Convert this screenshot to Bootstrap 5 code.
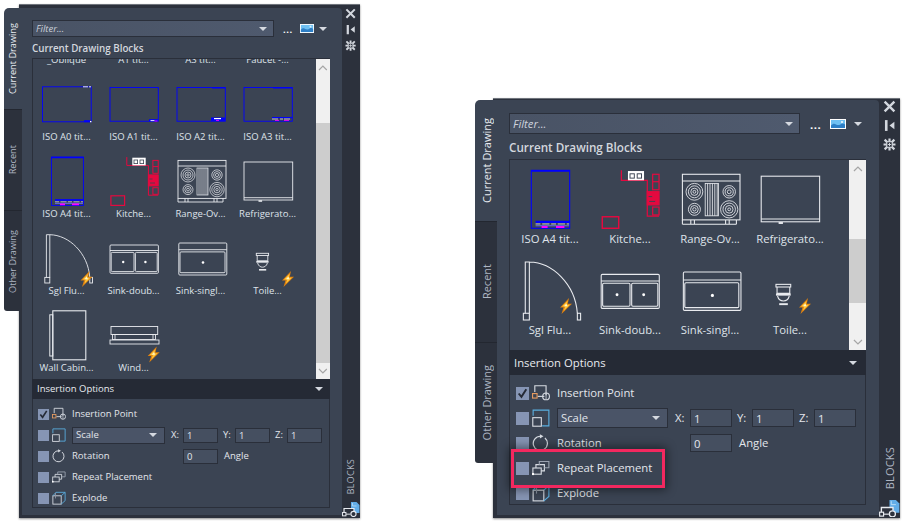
<!DOCTYPE html>
<html lang="en">
<head>
<meta charset="utf-8">
<title>Blocks palette</title>
<link rel="stylesheet" href="https://cdn.jsdelivr.net/npm/bootstrap@5.3.0/dist/css/bootstrap.min.css">
<style>
  html, body { height: 100%; background: #fff; overflow: hidden; }
  body { position: relative; font-family: "Open Sans", "Liberation Sans", sans-serif; color: #e3e6ec; }

  /* sizes differ between the two palettes, the structure does not */
  .pal-sm {
    left: 4px; top: 4px; width: 356px; height: 514px;
    --tab: 18px; --tab-pt: 4px; --win-pt: 3px; --frame: 3px; --strip: 18px; --fs: 9.5px; --head: 9.8px;
    --pad-t: 12px; --pad-l: 10px; --pad-r: 12px; --filter-h: 17px; --title-h: 21px; --row-gap: 11px;
    --thumb: 50px; --lab: 16px; --cell: 67px; --grid-h: 321px; --grid-top: -57.5px;
    --bar: 14px; --sb-a: 64px; --sb-b: 240px; --sb-c: 16px;
    --opt-h: 20px; --opt-pt: 4.5px; --row: 21px; --opt-pl: 5px;
    --cb: 11px; --ico: 14px; --g1: 3px; --g2: 6px; --sel: 93px; --ctl-h: 15px; --inp: 35px;
    --ax-x: 18px; --ax-p: 6px; --ax: 17px; --ax-p2: 5px; --rot: 111px; --ang: 6px;
    --filter-w: 242px; --dots-g: 9px; --dots: 14px; --imgw: 14px; --imgh: 9px; --tool-g: 3px; --car-g: 5px;
    --vtxt: 9.2px; --strip-gap: 5px; --blocks-mb: 8px;
  }
  .pal-lg {
    left: 475px; top: 98px; width: 425px; height: 420px;
    --tab: 22px; --tab-pt: 2px; --win-pt: 1px; --frame: 4px; --strip: 21px; --fs: 11.3px; --head: 11.7px;
    --pad-t: 13px; --pad-l: 12px; --pad-r: 13px; --filter-h: 21px; --title-h: 25px; --row-gap: 11px;
    --thumb: 60px; --lab: 20px; --cell: 80px; --grid-h: 191px; --grid-top: 8.5px;
    --bar: 17px; --sb-a: 79px; --sb-b: 64px; --sb-c: 47px;
    --opt-h: 25px; --opt-pt: 5.5px; --row: 25px; --opt-pl: 6px;
    --cb: 13px; --ico: 18px; --g1: 3px; --g2: 7px; --sel: 111px; --ctl-h: 18px; --inp: 42px;
    --ax-x: 22px; --ax-p: 7px; --ax: 20px; --ax-p2: 5px; --rot: 133px; --ang: 7px;
    --filter-w: 291px; --dots-g: 10px; --dots: 16px; --imgw: 16px; --imgh: 10px; --tool-g: 4px; --car-g: 8px;
    --vtxt: 11px; --strip-gap: 6px; --blocks-mb: 10px;
  }

  .palette { position: absolute; display: flex; font-size: var(--fs); line-height: 1; }
  .tabs { width: var(--tab); padding-top: var(--tab-pt); margin-bottom: auto; position: relative; z-index: 2; flex: none; }
  .tab {
    height: calc(100% / 3); display: flex; align-items: center; justify-content: center;
    background: #2c313c; border-top: 1px solid #232730; color: #aeb5c2;
  }
  .tabs.t-sm { height: 307px; }
  .tabs.t-lg { height: 365px; }
  .tab span { writing-mode: vertical-rl; transform: rotate(180deg); white-space: nowrap; font-size: var(--vtxt); }
  .tab:first-child { background: #3b4453; border-top: 0; border-radius: 5px 0 0 0; color: #e8ebf0; }
  .tab:last-child { border-radius: 0 0 0 3px; }

  .window {
    flex: 1; min-width: 0; display: flex; margin-left: calc(var(--frame) * -1);
    padding: var(--win-pt) 0 3px var(--frame); background: #2c313c;
    border-top: 1px solid #6f747c; box-shadow: 0 1px 2px rgba(0,0,0,.45);
  }
  .body { flex: 1; min-width: 0; display: flex; flex-direction: column; background: #3b4453;
    padding: var(--pad-t) var(--pad-r) 0 var(--pad-l); border-radius: 0 4px 0 0; }
  .strip { width: var(--strip); flex: none; display: flex; flex-direction: column; align-items: center; margin-bottom: -2px; color: #c6cbd4; }
  .strip svg.s { width: calc(var(--strip) * .62); height: calc(var(--strip) * .62); margin-bottom: var(--strip-gap); flex: none; }
  .blocks { writing-mode: vertical-rl; transform: rotate(180deg); font-size: var(--vtxt); letter-spacing: .2px; color: #aeb5c2; margin-top: auto; margin-bottom: var(--blocks-mb); }
  .strip svg.b { width: var(--strip); height: calc(var(--strip) * .83); margin-bottom: 0; }

  .filter.form-control {
    width: var(--filter-w); height: var(--filter-h); min-height: 0; padding: 0 0 0 3px; font-size: var(--fs); font-style: italic; line-height: 1;
    color: #d8dce4; border: 1px solid #2a2f3a; border-radius: 0;
    background: linear-gradient(90deg, #495365, #4f5a6e);
  }
  .filter::placeholder { color: #ccd1da; opacity: 1; }
  .caret { display: inline-block; width: 0; height: 0; border-style: solid; border-width: 4px 4px 0; border-color: #d5d9e0 transparent transparent; flex: none; }
  .filter-wrap { position: relative; flex: none; }
  .filter-wrap .caret { position: absolute; right: 7px; top: calc(50% - 2px); }
  .dots { letter-spacing: .5px; font-weight: 700; color: #fff; width: var(--dots); margin-left: var(--dots-g); line-height: 1; padding-top: 3px; }
  .pic { width: var(--imgw); height: var(--imgh); margin-left: var(--tool-g); flex: none; display: block; }
  .pic + .caret { margin-left: var(--car-g); }
  .title { height: var(--title-h); display: flex; align-items: center; font-weight: 600; font-size: var(--head); color: #d3d7de; flex: none; padding-top: 3px; }

  .blocks-box { height: var(--grid-h); display: flex; flex: none; border-top: 1px solid #2a2f3a; border-left: 1px solid #2a2f3a; overflow: hidden; }
  .grid-area { flex: 1; min-width: 0; overflow: hidden; }
  .thumbs { display: grid; grid-template-columns: repeat(4, var(--cell)); row-gap: var(--row-gap); margin-top: var(--grid-top); }
  .cell { display: flex; flex-direction: column; align-items: center; }
  .cell svg { width: var(--thumb); height: var(--thumb); display: block; overflow: visible; flex: none; fill: none; stroke: #e9ebef; stroke-width: .9; }
  .cell div { height: var(--lab); line-height: var(--lab); white-space: nowrap; color: #dfe3ea; }

  .bar { width: var(--bar); flex: none; background: #f0f0f0; display: flex; flex-direction: column; position: relative; }
  .bar .a { height: var(--sb-a); }
  .bar .b { height: var(--sb-b); background: #cdcdcd; }
  .bar .c { height: var(--sb-c); }
  .bar svg { position: absolute; left: 15%; width: 70%; height: 8px; fill: none; stroke: #a5a5a5; stroke-width: 1.2; }
  .bar svg.up { top: 5px; }
  .bar svg.down { bottom: 4px; }

  .opt-head { height: var(--opt-h); background: #252a35; display: flex; align-items: center; justify-content: space-between; padding: 0 calc(var(--pad-l) - 3px) 0 5px; flex: none; font-size: var(--fs); color: #e8ebf0; }
  .opt-box { flex: none; padding: var(--opt-pt) 0 0 var(--opt-pl); border: 1px solid #2a2f3a; border-top: 0; }
  .pal-sm .opt-box { height: 109px; }
  .pal-lg .opt-box { height: 130px; }
  .opt { height: var(--row); display: flex; align-items: center; position: relative; }
  .opt .form-check-input { width: var(--cb); height: var(--cb); margin: 0 var(--g1) 0 0; flex: none; border: 0; border-radius: 0; background-color: #8695b4; opacity: 1; }
  .opt .form-check-input:checked { background-color: #8695b4; background-image: url("data:image/svg+xml,%3csvg xmlns='http://www.w3.org/2000/svg' viewBox='0 0 12 12'%3e%3cpath fill='none' stroke='%23262b36' stroke-width='1.8' d='M2.5 6l2.5 3 4.5-7'/%3e%3c/svg%3e"); }
  .opt > svg { width: var(--ico); height: var(--ico); margin-right: var(--g2); flex: none; fill: none; }
  .rot { width: var(--rot); flex: none; }
  .sel.form-select {
    width: var(--sel); height: calc(var(--ctl-h) + 2px); min-height: 0; padding: 0 0 0 3px; font-size: var(--fs); line-height: 1; color: #e3e6ec; flex: none;
    border: 1px solid #2a2f3a; border-radius: 0; background-color: #4a5467;
    background-image: url("data:image/svg+xml,%3csvg xmlns='http://www.w3.org/2000/svg' viewBox='0 0 8 4'%3e%3cpath fill='%23d5d9e0' d='M0 0h8L4 4z'/%3e%3c/svg%3e");
    background-size: 8px 4px; background-position: right 7px center;
  }
  .axis { padding-left: var(--ax-p2); width: var(--ax); flex: none; }
  .axis.x { padding-left: var(--ax-p); width: var(--ax-x); }
  .num.form-control { width: var(--inp); height: var(--ctl-h); min-height: 0; padding: 0 0 0 3px; font-size: var(--fs); line-height: 1; flex: none; color: #e3e6ec; border: 1px solid #2a2f3a; border-radius: 0; background: #454f60; }
  .angle { margin-left: var(--ang); }

  /* the red callout sits over the rows above and below Repeat Placement */
  .callout > * { position: relative; z-index: 2; }
  .callout::before {
    content: ""; position: absolute; z-index: 1; left: -5px; top: -7px; width: 154px; height: 39px;
    border: 3px solid #f3285f; background: #3b4453; box-shadow: 0 0 9px 2px rgba(0,0,0,.45);
  }
</style>
</head>
<body>

<svg width="0" height="0" class="position-absolute">
  <defs>
    <symbol id="bolt" viewBox="0 0 12 16" overflow="visible">
      <path d="M9 0L0 9.500h3.500L1.500 16 12 5.800H7.800z" fill="#e0820f" stroke="none"/>
      <path d="M7.800 2.800L2 8.500h3.200L3.800 12.800 9.800 6.800H6.400z" fill="#ffc93c" stroke="none"/>
      <path d="M6.400 5.500L4 8.300h3.400z" fill="#fff6c8" stroke="none"/>
    </symbol>
    <symbol id="iso-a0" viewBox="0 0 50 50" overflow="visible">
      <rect x=".5" y="7.800" width="48.700" height="35" stroke="#0000ff" fill="none"/>
      <path d="M41 7.800h5M47 7.800h2" stroke="#fff"/>
      <path d="M42 42.200h6" stroke="#0000ff" stroke-width="2"/><path d="M48 42.600h1.400" stroke="#fff" stroke-width="1.200"/>
    </symbol>
    <symbol id="iso-a1" viewBox="0 0 50 50" overflow="visible">
      <rect x="1" y="8.500" width="48.300" height="33.700" stroke="#0000ff" fill="none"/>
      <path d="M40 41.200h9" stroke="#0000ff" stroke-width="2"/><path d="M41.500 41.600h4" stroke="#fff"/><path d="M45.500 42h3" stroke="#ff00ff"/>
    </symbol>
    <symbol id="iso-a2" viewBox="0 0 50 50" overflow="visible">
      <rect x="1" y="8.500" width="48.300" height="33.700" stroke="#0000ff" fill="none"/>
      <path d="M36 8.900h13" stroke="#0000ff" stroke-width="1.200"/>
      <path d="M35 40.200h14" stroke="#0000ff" stroke-width="3.400"/><path d="M38 39.600h7" stroke="#fff" stroke-width="1.200"/><path d="M40 41.400h3" stroke="#ff00ff"/>
    </symbol>
    <symbol id="iso-a3" viewBox="0 0 50 50" overflow="visible">
      <rect x="1" y="8.500" width="48.300" height="33.700" stroke="#0000ff" fill="none"/>
      <path d="M30 8.900h19" stroke="#0000ff" stroke-width="1.200"/>
      <path d="M29 38.600h20" stroke="#0000ff" stroke-width="1.200"/>
      <path d="M29 40h20" stroke="#fff" stroke-width=".7" stroke-dasharray="6 2 3 1"/>
      <path d="M32 41.400h4M41 41.400h5" stroke="#ff00ff"/>
    </symbol>
    <symbol id="iso-a4" viewBox="0 0 50 50" overflow="visible">
      <rect x="9.400" y="1.100" width="32" height="48.300" stroke="#0000ff" fill="none"/>
      <path d="M9.400 1.500h32" stroke="#0000ff" stroke-width="1.400"/>
      <path d="M13 44h28" stroke="#0000ff" stroke-width="1.800"/>
      <path d="M13 45.800h28" stroke="#fff" stroke-width=".6" stroke-dasharray="4 1.500 6 1.500"/>
      <path d="M13 47.300h28" stroke="#6a6af5" stroke-width="1"/>
      <path d="M18 48.400h5M30 48.400h7" stroke="#ff00ff" stroke-width="1.600"/>
    </symbol>
    <symbol id="kitchen" viewBox="0 0 50 50" overflow="visible">
      <g stroke="#e4093f" stroke-width="1" fill="none">
        <path d="M17.800 1.100v8.300h21.600v29.800h9.800"/>
        <rect x="43.900" y="4.400" width="5.300" height="12.900"/><path d="M43.900 10.600h5.300"/>
        <rect x="39.400" y="18.900" width="9.800" height="11" fill="#e4093f"/>
        <rect x="43.900" y="31.700" width="5.300" height="6.600"/>
        <rect x="1.900" y="39.800" width="13.700" height="9.600" stroke-width="1.200"/>
      </g>
      <rect x="23.300" y="1.700" width="13.400" height="7.700" fill="#fff" stroke="none"/>
      <rect x="25" y="4" width="3.600" height="3.600" fill="none" stroke="#3b4453" stroke-width=".8"/>
      <rect x="31" y="4" width="3.600" height="3.600" fill="none" stroke="#3b4453" stroke-width=".8"/>
      <path d="M40.500 23h3M41 27h5" stroke="#3b4453" stroke-width=".8"/>
    </symbol>
    <symbol id="range" viewBox="0 0 50 50" overflow="visible">
      <rect x="2" y="4.400" width="48" height="38"/><path d="M2 10h48M2 46h45M2 42.400v3.600M47 42.400v3.600M9 42.400v3.600M12 42.400v3.600M38 42.400v3.600M41 42.400v3.600"/>
      <g stroke-width=".7">
        <circle cx="12" cy="19" r="7"/><circle cx="12" cy="19" r="5"/><circle cx="12" cy="19" r="3"/><circle cx="12" cy="19" r="1.200"/>
        <circle cx="12" cy="33.600" r="5"/><circle cx="12" cy="33.600" r="3.200"/><circle cx="12" cy="33.600" r="1.400"/>
        <circle cx="41" cy="19" r="5.200"/><circle cx="41" cy="19" r="3.400"/><circle cx="41" cy="19" r="1.600"/>
        <circle cx="41" cy="33.600" r="7.200"/><circle cx="41" cy="33.600" r="5.200"/><circle cx="41" cy="33.600" r="3.200"/><circle cx="41" cy="33.600" r="1.200"/>
        <rect x="21" y="12" width="11" height="27"/><path d="M23 12v27M25 12v27M27 12v27M29 12v27M31 12v27"/>
      </g>
    </symbol>
    <symbol id="fridge" viewBox="0 0 50 50" overflow="visible">
      <rect x="1" y="6" width="48.700" height="38"/><path d="M1 41.700h48.700"/><path d="M15.500 45h3.600" stroke-width="1.600"/>
    </symbol>
    <symbol id="door" viewBox="0 0 50 50" overflow="visible">
      <path d="M4.400 44.400V1.700h3.400v42.700M7.800 1.700C27 2 46 20 47.800 44.400"/>
      <rect x="2.800" y="44.400" width="5" height="5.600"/><rect x="47.800" y="44.400" width="2.700" height="5.600"/>
    </symbol>
    <symbol id="sink2" viewBox="0 0 50 50" overflow="visible">
      <rect x="1" y="12" width="48.400" height="28.300" rx="1"/><path d="M1 17.500h48.400"/>
      <rect x="2.200" y="19.400" width="22.800" height="19.200" rx="1"/><rect x="26.400" y="19.400" width="21.800" height="19.200" rx="1"/>
      <circle cx="14.200" cy="29" r="1.200" fill="#fff" stroke="none"/><circle cx="36.400" cy="29" r="1.200" fill="#fff" stroke="none"/>
    </symbol>
    <symbol id="sink1" viewBox="0 0 50 50" overflow="visible">
      <rect x="2.800" y="10" width="48" height="32" rx="1"/><path d="M2.800 16.700h48"/>
      <rect x="4" y="18.900" width="45" height="20.800" rx="1"/>
      <circle cx="27" cy="29.500" r="1.300" fill="#fff" stroke="none"/>
    </symbol>
    <symbol id="toilet" viewBox="0 0 50 50" overflow="visible">
      <rect x="13.300" y="20.300" width="12.300" height="2.200"/>
      <path d="M14.200 22.500v5.300h10.600v-5.300"/><path d="M13.300 28.800h12.300" stroke-width="1.800"/>
      <path d="M14.600 30c.8 3 3 4.200 4.900 4.200s4.100-1.200 4.900-4.200"/><path d="M16 36.800h7.200" stroke-width="1.600"/>
    </symbol>
    <symbol id="cabinet" viewBox="0 0 50 50" overflow="visible">
      <rect x="10.800" y=".8" width="33" height="49" stroke-width="1.100"/><rect x="7.800" y="4.800" width="3" height="41.200" stroke-width="1"/>
    </symbol>
    <symbol id="wind" viewBox="0 0 50 50" overflow="visible">
      <rect x="2" y="16.500" width="46.700" height="8"/>
      <rect x="3.500" y="24.500" width="43" height="5"/><path d="M6 24.500v5M44 24.500v5"/>
      <rect x="1" y="30" width="49" height="4"/>
    </symbol>

    <symbol id="i-point" viewBox="0 0 16 16"><path d="M2.500 7V1.500h10V10" stroke="#d7dbe2"/><path d="M5 11h6" stroke="#d7dbe2"/><rect x=".5" y="8.500" width="4" height="4" stroke="#e59a5f"/><circle cx="12.500" cy="11" r="3" stroke="#d7dbe2"/><path d="M12.500 8v6" stroke="#d7dbe2" stroke-width=".7"/></symbol>
    <symbol id="i-scale" viewBox="0 0 16 16"><path d="M1 6V1h14v14h-6" stroke="#5aaee0"/><rect x=".7" y="7.700" width="7.600" height="7.600" stroke="#d7dbe2"/></symbol>
    <symbol id="i-rot" viewBox="0 0 16 16"><path d="M11.500 3.500A6.300 6.300 0 1 1 7.500 2" stroke="#d7dbe2" stroke-width="1.100"/><path d="M7 .2l3.200 1.800L7 4z" fill="#d7dbe2"/></symbol>
    <symbol id="i-rep" viewBox="0 0 16 16"><rect x=".8" y="8" width="7.400" height="5.500" stroke="#d7dbe2"/><path d="M3.500 8V5h7.500v5.500H8.200" stroke="#d7dbe2"/><path d="M6.500 5V2.200H15v5.600h-4" stroke="#9aa2b0"/><rect x="0" y="12.500" width="1.800" height="1.800" fill="#fff"/></symbol>
    <symbol id="i-exp" viewBox="0 0 16 16"><rect x="1" y="5.500" width="9.500" height="9.500" stroke="#d7dbe2"/><path d="M1 5.500l3.500-4H15v9.500l-4.500 4M10.500 5.500L15 1.500" stroke="#5aaee0"/><path d="M4 2v6.500" stroke="#8d96a5"/></symbol>
    <symbol id="i-x" viewBox="0 0 12 12"><path d="M1.500 1.500l9 9M10.500 1.500l-9 9" stroke="#d3d7de" stroke-width="2.200" fill="none"/></symbol>
    <symbol id="i-pin" viewBox="0 0 12 12"><path d="M3 1v10" stroke="#d3d7de" stroke-width="2.400"/><path d="M10.500 2.500v7L6 6z" fill="#d3d7de"/></symbol>
    <symbol id="i-gear" viewBox="0 0 12 12"><path d="M1.500 1.500l9 9M10.500 1.500l-9 9M6 .5v11M.5 6h11" stroke="#d3d7de" stroke-width="2"/><path d="M3.500 3.500h5v5h-5z" fill="#2c313c" stroke="#d3d7de"/><path d="M4.500 6h3M6 4.500v3" stroke="#d3d7de" stroke-width=".9"/></symbol>
    <symbol id="i-pal" viewBox="0 0 18 15"><path d="M9 0h5.500L17.500 3v8H9z" fill="#62ade8"/><path d="M10.500 1v3h4" fill="none" stroke="#bfe0f7" stroke-width=".8"/><path d="M2 13V6.500h10V9" stroke="#e8ebf0" stroke-width="1.200" fill="#2c313c"/><rect x=".5" y="10.500" width="3.400" height="3.400" fill="#2c313c" stroke="#e8ebf0"/><path d="M4 12.200h4.500" stroke="#e8ebf0"/><circle cx="11.500" cy="12" r="2.600" stroke="#e8ebf0" stroke-width="1.100" fill="#2c313c"/></symbol>
    <symbol id="pic" viewBox="0 0 16 10" preserveAspectRatio="none"><rect width="16" height="10" fill="#fff"/><rect x="1" y="1" width="14" height="8" fill="#6fc0f2"/><path d="M1 9V6.500c2-2 3.500-2 5-1 2 1 4 .5 5-.5 1.500-1 3-.5 4 .5V9z" fill="#2e7fc6"/><rect x="11" y="2" width="2" height="2" fill="#d7eefc"/></symbol>
    <symbol id="up" viewBox="0 0 10 8"><path d="M1 6l4-4 4 4"/></symbol>
    <symbol id="down" viewBox="0 0 10 8"><path d="M1 2l4 4 4-4"/></symbol>
  </defs>
</svg>

<!-- left palette -->
<div class="palette pal-sm">
  <div class="tabs t-sm d-flex flex-column">
    <div class="tab flex-fill"><span>Current Drawing</span></div>
    <div class="tab flex-fill"><span>Recent</span></div>
    <div class="tab flex-fill"><span>Other Drawing</span></div>
  </div>
  <div class="window">
    <div class="body">
      <div class="d-flex align-items-center">
        <div class="filter-wrap"><input class="form-control filter" placeholder="Filter..."><span class="caret"></span></div>
        <span class="dots">...</span>
        <svg class="pic"><use href="#pic"/></svg>
        <span class="caret"></span>
      </div>
      <div class="title">Current Drawing Blocks</div>
      <div class="blocks-box">
        <div class="grid-area">
          <div class="thumbs">
            <div class="cell"><svg></svg><div>_Oblique</div></div>
            <div class="cell"><svg></svg><div>A1 tit...</div></div>
            <div class="cell"><svg></svg><div>A3 tit...</div></div>
            <div class="cell"><svg></svg><div>Faucet -...</div></div>
            <div class="cell"><svg><use href="#iso-a0"/></svg><div>ISO A0 tit...</div></div>
            <div class="cell"><svg><use href="#iso-a1"/></svg><div>ISO A1 tit...</div></div>
            <div class="cell"><svg><use href="#iso-a2"/></svg><div>ISO A2 tit...</div></div>
            <div class="cell"><svg><use href="#iso-a3"/></svg><div>ISO A3 tit...</div></div>
            <div class="cell"><svg><use href="#iso-a4"/></svg><div>ISO A4 tit...</div></div>
            <div class="cell"><svg><use href="#kitchen"/></svg><div>Kitche...</div></div>
            <div class="cell"><svg><use href="#range"/></svg><div>Range-Ov...</div></div>
            <div class="cell"><svg><use href="#fridge"/></svg><div>Refrigerato...</div></div>
            <div class="cell"><svg><use href="#door"/><use href="#bolt" x="38.500" y="38" width="12" height="16"/></svg><div>Sgl Flu...</div></div>
            <div class="cell"><svg><use href="#sink2"/></svg><div>Sink-doub...</div></div>
            <div class="cell"><svg><use href="#sink1"/></svg><div>Sink-singl...</div></div>
            <div class="cell"><svg><use href="#toilet"/><use href="#bolt" x="39" y="38" width="12" height="16"/></svg><div>Toile...</div></div>
            <div class="cell"><svg><use href="#cabinet"/></svg><div>Wall Cabin...</div></div>
            <div class="cell"><svg><use href="#wind"/><use href="#bolt" x="38.700" y="36.500" width="12" height="16"/></svg><div>Wind...</div></div>
          </div>
        </div>
        <div class="bar"><div class="a"></div><div class="b"></div><div class="c"></div>
          <svg class="up"><use href="#up"/></svg><svg class="down"><use href="#down"/></svg></div>
      </div>
      <div class="opt-head"><span>Insertion Options</span><span class="caret"></span></div>
      <div class="opt-box">
        <div class="opt"><input class="form-check-input" type="checkbox" checked><svg><use href="#i-point"/></svg><span>Insertion Point</span></div>
        <div class="opt"><input class="form-check-input" type="checkbox"><svg><use href="#i-scale"/></svg>
          <select class="form-select sel"><option>Scale</option></select>
          <span class="axis x">X:</span><input class="form-control num" value="1">
          <span class="axis">Y:</span><input class="form-control num" value="1">
          <span class="axis">Z:</span><input class="form-control num" value="1"></div>
        <div class="opt"><input class="form-check-input" type="checkbox"><svg><use href="#i-rot"/></svg><span class="rot">Rotation</span><input class="form-control num" value="0"><span class="angle">Angle</span></div>
        <div class="opt"><input class="form-check-input" type="checkbox"><svg><use href="#i-rep"/></svg><span>Repeat Placement</span></div>
        <div class="opt"><input class="form-check-input" type="checkbox"><svg><use href="#i-exp"/></svg><span>Explode</span></div>
      </div>
    </div>
    <div class="strip">
      <svg class="s"><use href="#i-x"/></svg><svg class="s"><use href="#i-pin"/></svg><svg class="s"><use href="#i-gear"/></svg>
      <span class="blocks">BLOCKS</span>
      <svg class="s b"><use href="#i-pal"/></svg>
    </div>
  </div>
</div>

<!-- right palette -->
<div class="palette pal-lg">
  <div class="tabs t-lg d-flex flex-column">
    <div class="tab flex-fill"><span>Current Drawing</span></div>
    <div class="tab flex-fill"><span>Recent</span></div>
    <div class="tab flex-fill"><span>Other Drawing</span></div>
  </div>
  <div class="window">
    <div class="body">
      <div class="d-flex align-items-center">
        <div class="filter-wrap"><input class="form-control filter" placeholder="Filter..."><span class="caret"></span></div>
        <span class="dots">...</span>
        <svg class="pic"><use href="#pic"/></svg>
        <span class="caret"></span>
      </div>
      <div class="title">Current Drawing Blocks</div>
      <div class="blocks-box">
        <div class="grid-area">
          <div class="thumbs">
            <div class="cell"><svg><use href="#iso-a4"/></svg><div>ISO A4 tit...</div></div>
            <div class="cell"><svg><use href="#kitchen"/></svg><div>Kitche...</div></div>
            <div class="cell"><svg><use href="#range"/></svg><div>Range-Ov...</div></div>
            <div class="cell"><svg><use href="#fridge"/></svg><div>Refrigerato...</div></div>
            <div class="cell"><svg><use href="#door"/><use href="#bolt" x="40" y="38" width="12" height="16"/></svg><div>Sgl Flu...</div></div>
            <div class="cell"><svg><use href="#sink2"/></svg><div>Sink-doub...</div></div>
            <div class="cell"><svg><use href="#sink1"/></svg><div>Sink-singl...</div></div>
            <div class="cell"><svg><use href="#toilet"/><use href="#bolt" x="39" y="38" width="12" height="16"/></svg><div>Toile...</div></div>
          </div>
        </div>
        <div class="bar"><div class="a"></div><div class="b"></div><div class="c"></div>
          <svg class="up"><use href="#up"/></svg><svg class="down"><use href="#down"/></svg></div>
      </div>
      <div class="opt-head"><span>Insertion Options</span><span class="caret"></span></div>
      <div class="opt-box">
        <div class="opt"><input class="form-check-input" type="checkbox" checked><svg><use href="#i-point"/></svg><span>Insertion Point</span></div>
        <div class="opt"><input class="form-check-input" type="checkbox"><svg><use href="#i-scale"/></svg>
          <select class="form-select sel"><option>Scale</option></select>
          <span class="axis x">X:</span><input class="form-control num" value="1">
          <span class="axis">Y:</span><input class="form-control num" value="1">
          <span class="axis">Z:</span><input class="form-control num" value="1"></div>
        <div class="opt"><input class="form-check-input" type="checkbox"><svg><use href="#i-rot"/></svg><span class="rot">Rotation</span><input class="form-control num" value="0"><span class="angle">Angle</span></div>
        <div class="opt callout"><input class="form-check-input" type="checkbox"><svg><use href="#i-rep"/></svg><span>Repeat Placement</span></div>
        <div class="opt"><input class="form-check-input" type="checkbox"><svg><use href="#i-exp"/></svg><span>Explode</span></div>
      </div>
    </div>
    <div class="strip">
      <svg class="s"><use href="#i-x"/></svg><svg class="s"><use href="#i-pin"/></svg><svg class="s"><use href="#i-gear"/></svg>
      <span class="blocks">BLOCKS</span>
      <svg class="s b"><use href="#i-pal"/></svg>
    </div>
  </div>
</div>

<script src="https://cdn.jsdelivr.net/npm/bootstrap@5.3.0/dist/js/bootstrap.bundle.min.js"></script>
</body>
</html>
